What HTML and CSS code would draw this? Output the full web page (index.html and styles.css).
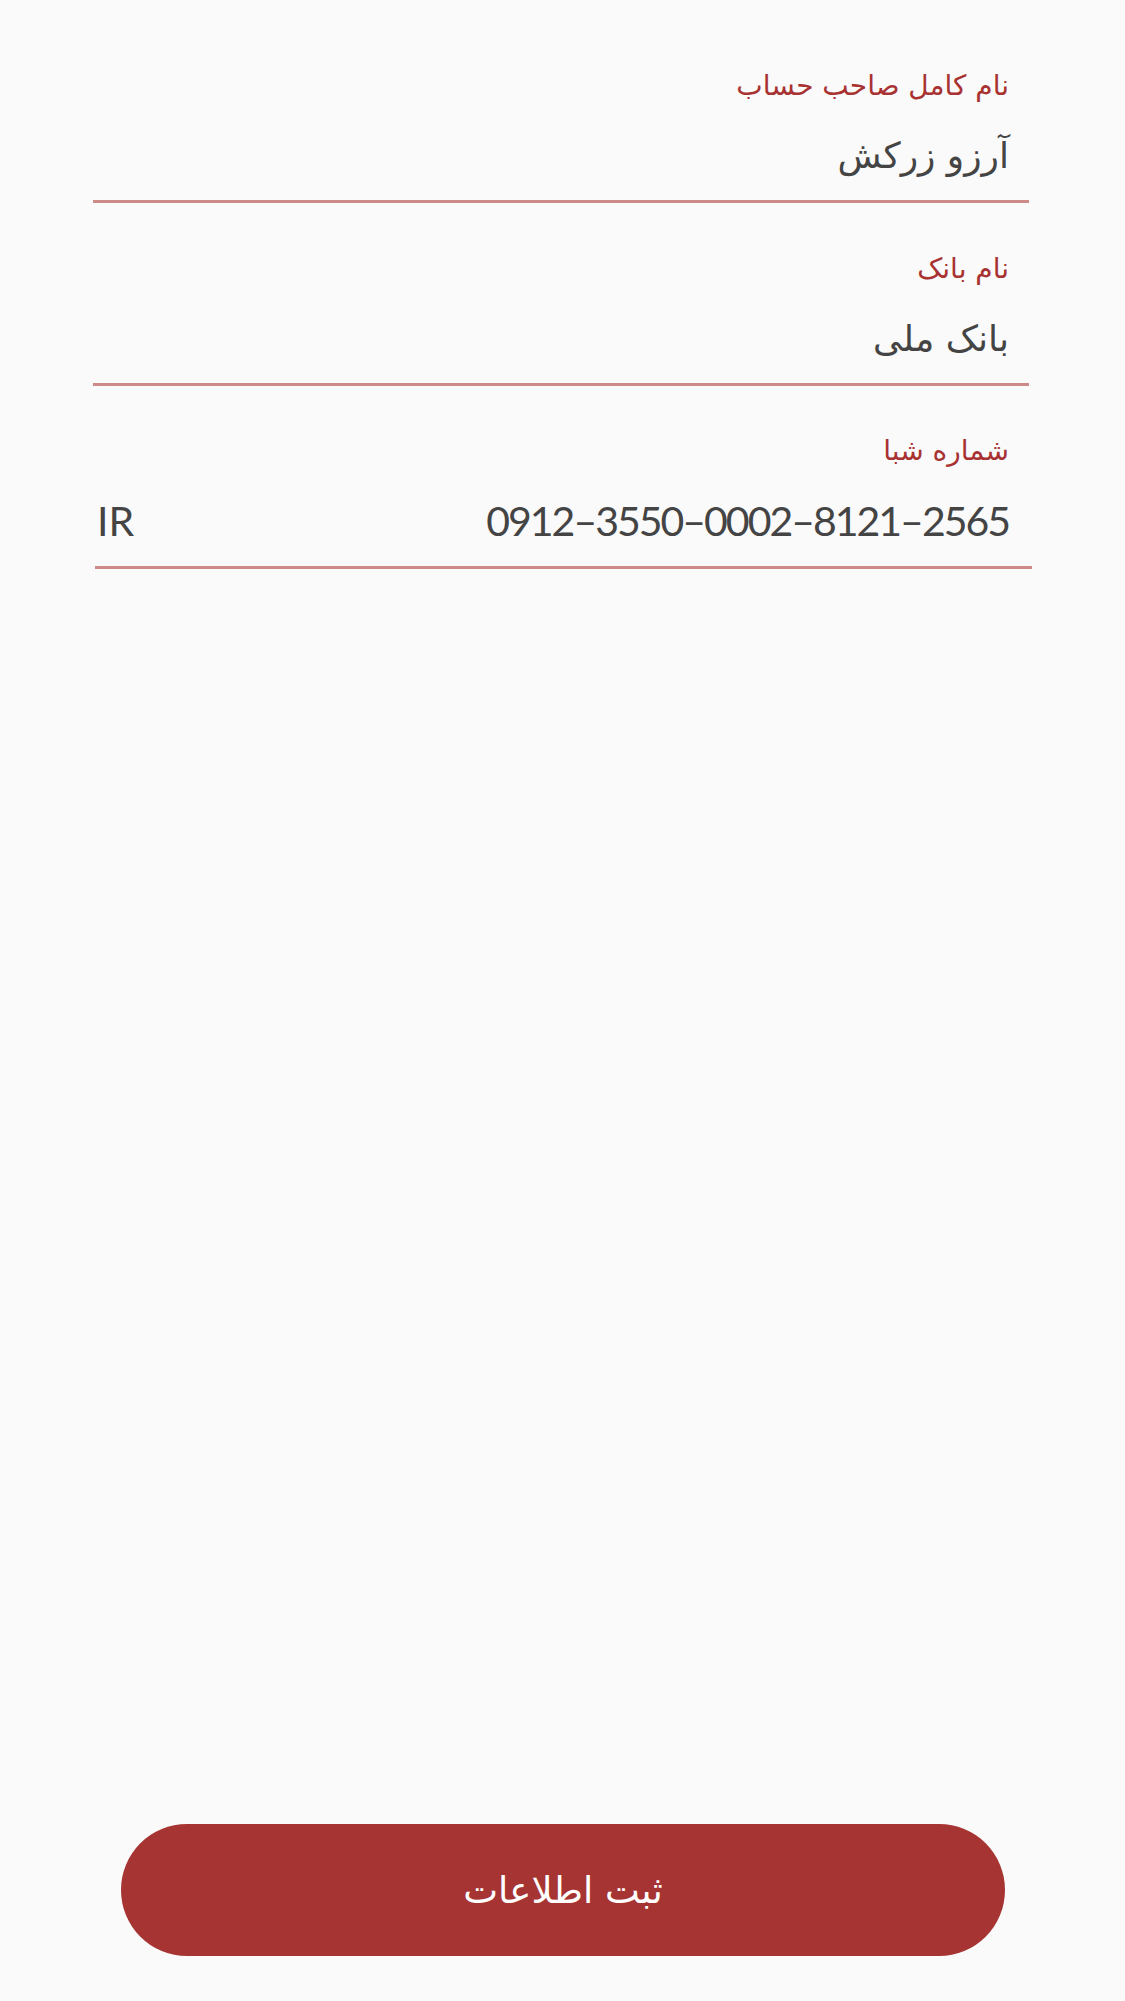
FILE: index.html
```html
<!DOCTYPE html>
<html lang="fa" dir="rtl">
<head>
<meta charset="utf-8">
<title>اطلاعات حساب</title>
<link rel="stylesheet" href="styles.css">
</head>
<body>
<div class="page">
  <form class="form">
    <div class="field field-first">
      <div class="label">نام کامل صاحب حساب</div>
      <div class="value">آرزو زرکش</div>
    </div>
    <div class="field">
      <div class="label">نام بانک</div>
      <div class="value">بانک ملی</div>
    </div>
    <div class="field field-iban">
      <div class="label">شماره شبا</div>
      <div class="value value-row">
        <span class="iban" dir="ltr">0912–3550–0002–8121–2565</span>
        <span class="prefix" dir="ltr">IR</span>
      </div>
    </div>
  </form>
  <button class="submit" type="button">ثبت اطلاعات</button>
</div>
</body>
</html>
```
FILE: styles.css
```css
html, body {
  margin: 0;
  padding: 0;
  background: #fafafa;
}
body {
  font-family: Lato, "DejaVu Sans", sans-serif;
}
.page {
  height: 2001px;
  display: flex;
  flex-direction: column;
  align-items: center;
  box-sizing: border-box;
  padding-bottom: 45px;
}
.form {
  width: 936px;
  margin-right: 3px;
  display: flex;
  flex-direction: column;
  flex: 1;
}
.field {
  padding: 48px 20px 14px 0;
  border-bottom: 3px solid #cc8a88;
}
.field-first {
  margin-top: 20px;
}
.field-iban {
  margin-left: 2px;
  margin-right: -3px;
  padding-top: 47px;
  padding-bottom: 15px;
  padding-right: 23px;
}
.label {
  font-family: "DejaVu Sans", sans-serif;
  font-size: 28px;
  line-height: 36px;
  color: #a83232;
}
.value {
  margin-top: 22px;
  font-family: "DejaVu Sans", sans-serif;
  font-size: 36px;
  line-height: 60px;
  color: #444444;
}
.value-row {
  display: flex;
  justify-content: space-between;
  align-items: center;
}
.iban, .prefix {
  font-family: Lato, sans-serif;
  font-size: 41px;
  color: #444444;
}
.iban {
  letter-spacing: -2px;
}
.prefix {
  padding-left: 2px;
}
.submit {
  width: 884px;
  height: 132px;
  border: none;
  border-radius: 66px;
  background: #a63432;
  color: #ffffff;
  font-family: "DejaVu Sans", sans-serif;
  font-size: 37px;
  margin-left: 1px;
}
```
